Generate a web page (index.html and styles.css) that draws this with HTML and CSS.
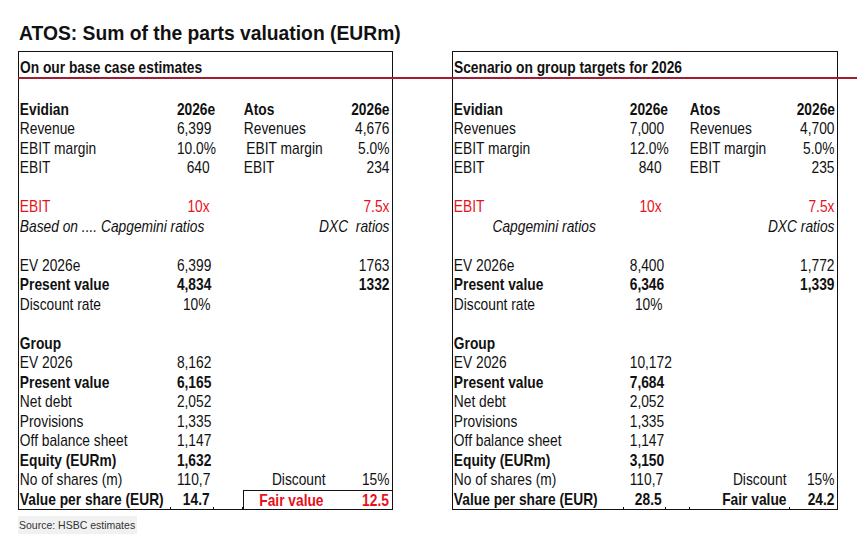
FILE: index.html
```html
<!DOCTYPE html>
<html lang="en">
<head>
<meta charset="utf-8">
<title>ATOS: Sum of the parts valuation</title>
<link rel="stylesheet" href="styles.css">
</head>
<body>
<div class="page">
  <h1 class="title">ATOS: Sum of the parts valuation (EURm)</h1>
  <div class="tables">
    <div class="redline"></div>
    <section class="box box-left">
      <div class="head"><span class="ht">On our base case estimates</span></div>
      <div class="spacer"></div>
      <div class="row"><span class="a b">Evidian</span><span class="v b">2026e</span><span></span><span class="d b">Atos</span><span class="v b">2026e</span></div>
      <div class="row"><span class="a">Revenue</span><span class="v">6,399</span><span></span><span class="d">Revenues</span><span class="v">4,676</span></div>
      <div class="row"><span class="a">EBIT margin</span><span class="v">10.0%</span><span></span><span class="d ind">EBIT margin</span><span class="v">5.0%</span></div>
      <div class="row"><span class="a">EBIT</span><span class="v">640</span><span></span><span class="d">EBIT</span><span class="v">234</span></div>
      <div class="row"></div>
      <div class="row red"><span class="a">EBIT</span><span class="v">10x</span><span></span><span class="d"></span><span class="v">7.5x</span></div>
      <div class="row it"><span class="a span3">Based on .... Capgemini ratios</span><span class="v span2">DXC&nbsp; ratios</span></div>
      <div class="row"></div>
      <div class="row"><span class="a">EV 2026e</span><span class="v">6,399</span><span></span><span class="d"></span><span class="v">1763</span></div>
      <div class="row b"><span class="a">Present value</span><span class="v">4,834</span><span></span><span class="d"></span><span class="v">1332</span></div>
      <div class="row"><span class="a">Discount rate</span><span class="v">10%</span></div>
      <div class="row"></div>
      <div class="row b"><span class="a">Group</span></div>
      <div class="row"><span class="a">EV 2026</span><span class="v">8,162</span></div>
      <div class="row b"><span class="a">Present value</span><span class="v">6,165</span></div>
      <div class="row"><span class="a">Net debt</span><span class="v">2,052</span></div>
      <div class="row"><span class="a">Provisions</span><span class="v">1,335</span></div>
      <div class="row"><span class="a">Off balance sheet</span><span class="v">1,147</span></div>
      <div class="row b"><span class="a">Equity (EURm)</span><span class="v">1,632</span></div>
      <div class="row"><span class="a">No of shares (m)</span><span class="v">110,7</span><span></span><span class="dr">Discount</span><span class="v">15%</span></div>
      <div class="row b last"><span class="a">Value per share (EUR)</span><span class="v">14.7</span><span class="tick tick-b"></span><span class="fv fvl red"><span class="t">Fair value</span></span><span class="fv red fve"><span class="t">12.5</span></span>
        <i class="tk tk1"></i><i class="tk tk2"></i></div>
    </section>
    <section class="box box-right">
      <div class="head"><span class="ht">Scenario on group targets for 2026</span></div>
      <div class="spacer"></div>
      <div class="row"><span class="a b">Evidian</span><span class="v b">2026e</span><span></span><span class="d b">Atos</span><span class="v b">2026e</span></div>
      <div class="row"><span class="a">Revenues</span><span class="v">7,000</span><span></span><span class="d">Revenues</span><span class="v">4,700</span></div>
      <div class="row"><span class="a">EBIT margin</span><span class="v">12.0%</span><span></span><span class="d">EBIT margin</span><span class="v">5.0%</span></div>
      <div class="row"><span class="a">EBIT</span><span class="v">840</span><span></span><span class="d">EBIT</span><span class="v">235</span></div>
      <div class="row"></div>
      <div class="row red"><span class="a">EBIT</span><span class="v">10x</span><span></span><span class="d"></span><span class="v">7.5x</span></div>
      <div class="row it"><span class="a span3 cap">Capgemini ratios</span><span class="v span2">DXC ratios</span></div>
      <div class="row"></div>
      <div class="row"><span class="a">EV 2026e</span><span class="v">8,400</span><span></span><span class="d"></span><span class="v">1,772</span></div>
      <div class="row b"><span class="a">Present value</span><span class="v">6,346</span><span></span><span class="d"></span><span class="v">1,339</span></div>
      <div class="row"><span class="a">Discount rate</span><span class="v">10%</span></div>
      <div class="row"></div>
      <div class="row b"><span class="a">Group</span></div>
      <div class="row"><span class="a">EV 2026</span><span class="v">10,172</span></div>
      <div class="row b"><span class="a">Present value</span><span class="v">7,684</span></div>
      <div class="row"><span class="a">Net debt</span><span class="v">2,052</span></div>
      <div class="row"><span class="a">Provisions</span><span class="v">1,335</span></div>
      <div class="row"><span class="a">Off balance sheet</span><span class="v">1,147</span></div>
      <div class="row b"><span class="a">Equity (EURm)</span><span class="v">3,150</span></div>
      <div class="row"><span class="a">No of shares (m)</span><span class="v">110,7</span><span></span><span class="dr">Discount</span><span class="v">15%</span></div>
      <div class="row b last"><span class="a">Value per share (EUR)</span><span class="v">28.5</span><span></span><span class="dr">Fair value</span><span class="v">24.2</span>
        <i class="tk tk1"></i><i class="tk tk2"></i><i class="tk tk3"></i><i class="tk tk4"></i></div>
    </section>
  </div>
  <p class="source">Source: HSBC estimates</p>
</div>
</body>
</html>
```

FILE: styles.css
```css
* { box-sizing: border-box; }
html, body { margin: 0; padding: 0; background: #fff; }
body {
  color: #111;
  font-family: "Liberation Sans", Arial, sans-serif;
}
.page {
  padding: 22px 0 0 18px;
}
.title {
  margin: 0;
  font-weight: bold;
  font-size: 19.3px;
  line-height: 24px;
  height: 24px;
  padding-left: 1px;
  color: #111;
}
.tables {
  position: relative;
  display: flex;
  gap: 59px;
  margin-top: 5px;
}
.redline {
  position: absolute;
  left: 0;
  top: 26px;
  width: 839px;
  height: 2px;
  background: #a51c30;
  z-index: 2;
}
.box {
  border: 1px solid #111;
  font-size: 16.4px;
}
.box-left { width: 375px; }
.box-right { width: 386px; }
.box-left .row { grid-template-columns: 151px 43px 30px 85px 64px; }
.box-right .row { grid-template-columns: 170px 42px 24px 100px 48px; }
.head {
  height: 27px;
  padding: 6px 0 0 1px;
  line-height: 19.5px;
  font-weight: bold;
  white-space: nowrap;
}
.ht {
  display: inline-block;
  transform: scaleX(0.84);
  transform-origin: left center;
}
.spacer { height: 20.5px; }
.row {
  position: relative;
  display: grid;
  height: 19.5px;
  line-height: 19.5px;
  white-space: nowrap;
}
.row > span { display: block; min-width: 0; }

/* condensed cells: labels shrink toward the left, numbers toward the right */
.a, .d { transform: scaleX(0.84); transform-origin: left center; }
.v, .dr { transform: scaleX(0.84); transform-origin: right center; }

.a { padding-left: 1px; }
.d { padding-left: 1px; }
.ind { padding-left: 4px; }
.v { text-align: right; padding-right: 4px; }
.row > .v:last-of-type { padding-right: 3px; }
.dr { text-align: right; padding-right: 3px; }
.b { font-weight: bold; }
.red { color: #e8101c; }
.it { font-style: italic; }
.span3 { grid-column: 1 / 4; }
.span2 { grid-column: 4 / 6; text-align: right; }
.cap { padding-left: 47px; }

/* Fair value frame (left table) */
.row > .fv {
  transform: none;
  text-align: right;
  border-top: 1px solid #111;
  line-height: 18.5px;
  padding-right: 3px;
}
.row > .fvl { border-left: 1px solid #111; padding-right: 4px; }
.fv .t {
  display: inline-block;
  transform: scaleX(0.84);
  transform-origin: right center;
}

/* small cell-border stubs on the bottom edge */
.tk {
  position: absolute;
  bottom: 0;
  width: 1px;
  height: 2px;
  background: #111;
}
.box-left .tk1 { left: 151px; }
.box-left .tk2 { left: 194px; }
.box-right .tk1 { left: 170px; }
.box-right .tk2 { left: 212px; }
.box-right .tk3 { left: 236px; }
.box-right .tk4 { left: 336px; }
.tick { position: relative; }
.tick-b::after {
  content: "";
  position: absolute;
  right: 0;
  bottom: 0;
  width: 1px;
  height: 2px;
  background: #111;
}

.source {
  display: inline-block;
  margin: 6px 0 0 0;
  padding: 2px 2px 2px 1px;
  font-size: 10.5px;
  line-height: 14px;
  color: #333;
  background: #f1f1f1;
}
```
